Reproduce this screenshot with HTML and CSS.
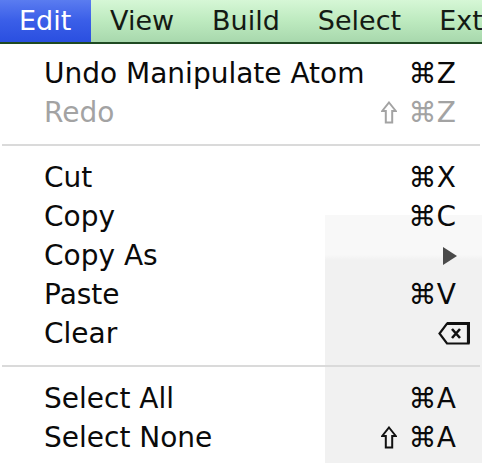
FILE: index.html
```html
<!DOCTYPE html>
<html>
<head>
<meta charset="utf-8">
<link rel="stylesheet" href="styles.css">
</head>
<body>
<div class="screen">
  <div class="menubar">
    <span class="mb-item active">Edit</span>
    <span class="mb-item">View</span>
    <span class="mb-item">Build</span>
    <span class="mb-item">Select</span>
    <span class="mb-item">Ext</span>
  </div>
  <div class="menu">
    <div class="bg-panel"></div>
    <div class="row"><span class="label">Undo Manipulate Atom</span><span class="key">⌘Z</span></div>
    <div class="row disabled"><span class="label">Redo</span><span class="key"><svg class="shift" width="16" height="23" viewBox="0 0 16 23"><path d="M8 1.5 L14.8 10 H11.2 V21.5 H4.8 V10 H1.2 Z" fill="none" stroke="#a3a3a3" stroke-width="2" stroke-linejoin="miter"/></svg>⌘Z</span></div>
    <div class="sep"></div>
    <div class="row"><span class="label">Cut</span><span class="key">⌘X</span></div>
    <div class="row"><span class="label">Copy</span><span class="key">⌘C</span></div>
    <div class="row"><span class="label">Copy As</span><span class="key"><svg class="tri" width="16" height="18" viewBox="0 0 16 18"><path d="M1 0 L15 9 L1 18 Z" fill="#4a4a4a"/></svg></span></div>
    <div class="row"><span class="label">Paste</span><span class="key">⌘V</span></div>
    <div class="row"><span class="label">Clear</span><span class="key"><svg class="del" width="32" height="23" viewBox="0 0 32 23"><path d="M9 1.5 H30.5 V21.5 H9 L1.5 11.5 Z" fill="none" stroke="#111" stroke-width="2.2" stroke-linejoin="miter"/><path d="M9 1.5 H30.5 V21.5" fill="none" stroke="#111" stroke-width="3.2"/><path d="M14 7 L22 16 M22 7 L14 16" stroke="#111" stroke-width="2.6"/></svg></span></div>
    <div class="sep"></div>
    <div class="row"><span class="label">Select All</span><span class="key">⌘A</span></div>
    <div class="row"><span class="label">Select None</span><span class="key"><svg class="shift" width="16" height="23" viewBox="0 0 16 23"><path d="M8 1.5 L14.8 10 H11.2 V21.5 H4.8 V10 H1.2 Z" fill="none" stroke="#111" stroke-width="2" stroke-linejoin="miter"/></svg>⌘A</span></div>
  </div>
</div>
</body>
</html>
```
FILE: styles.css
```css
html, body {
  margin: 0;
  padding: 0;
  background: #ffffff;
}
.screen {
  width: 482px;
  height: 463px;
  overflow: hidden;
  font-family: "DejaVu Sans", "Liberation Sans", sans-serif;
  color: #0a0a0a;
}
.menubar {
  height: 42px;
  display: flex;
  align-items: stretch;
  background: linear-gradient(180deg, #d6f7d6 0%, #bdeabf 50%, #a8d8ad 100%);
  border-bottom: 2px solid #1f4a22;
}
.mb-item {
  font-size: 27px;
  line-height: 42px;
  padding: 0 19px 0 19px;
  color: #141a14;
  flex-shrink: 0;
}
.mb-item.active {
  background: linear-gradient(180deg, #5a7cf0 0%, #3a5ee8 50%, #2a4fe0 100%);
  color: #ffffff;
  width: 53px;
  padding-left: 19px;
  padding-right: 19px;
}
.menu {
  position: relative;
  padding-top: 10px;
  background: #ffffff;
}
.bg-panel {
  position: absolute;
  left: 325px;
  top: 171px;
  right: 0;
  height: 270px;
  background: linear-gradient(180deg, #f8f8f8 0px, #f8f8f8 40px, #f1f1f1 45px, #f1f1f1 100%);
}
.row {
  position: relative;
  display: flex;
  justify-content: space-between;
  align-items: center;
  height: 39px;
  line-height: 39px;
  font-size: 28px;
  padding-left: 44px;
  padding-right: 26px;
}
.row.disabled {
  color: #a3a3a3;
}
.key {
  display: flex;
  align-items: center;
}
.key svg {
  flex-shrink: 0;
  display: block;
}
.shift {
  margin-right: 12px;
}
.tri {
  margin-right: -2px;
}
.del {
  margin-right: -14px;
}
.sep {
  position: relative;
  height: 26px;
  display: flex;
  align-items: center;
  padding: 0 2px;
}
.sep::before {
  content: "";
  display: block;
  width: 100%;
  height: 2px;
  background: #dadada;
}
```
